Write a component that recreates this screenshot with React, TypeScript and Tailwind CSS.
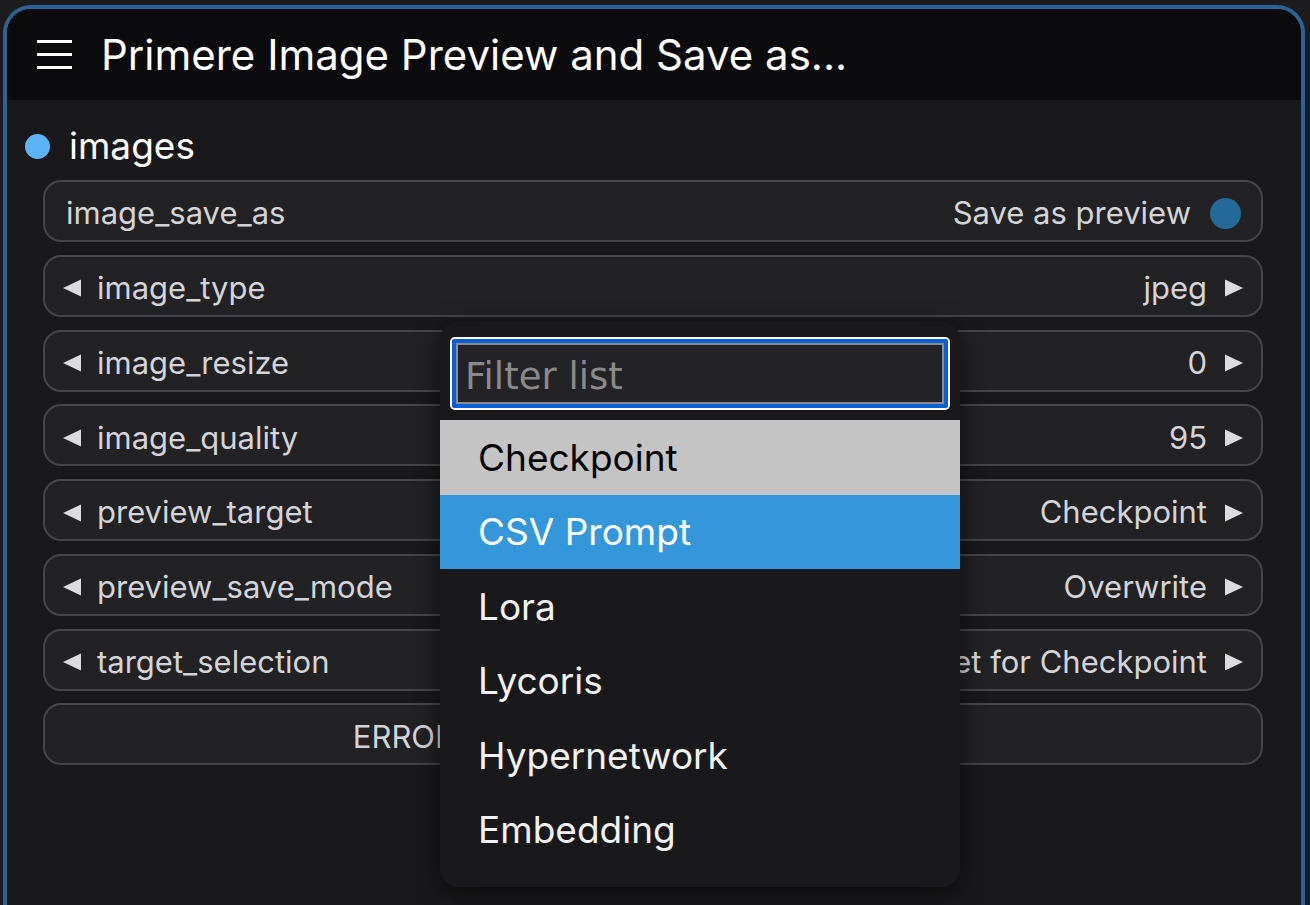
import { useState } from "react";

type Row = { name: string; value?: string; arrows?: boolean; toggle?: boolean };

const rows: Row[] = [
  { name: "image_save_as", value: "Save as preview", toggle: true },
  { name: "image_type", value: "jpeg", arrows: true },
  { name: "image_resize", value: "0", arrows: true },
  { name: "image_quality", value: "95", arrows: true },
  { name: "preview_target", value: "Checkpoint", arrows: true },
  { name: "preview_save_mode", value: "Overwrite", arrows: true },
  { name: "target_selection", value: "Select target for Checkpoint", arrows: true },
];

const options = ["Checkpoint", "CSV Prompt", "Lora", "Lycoris", "Hypernetwork", "Embedding"];

// small triangle used for the combo arrows
const Arrow = ({ dir }: { dir: "left" | "right" }) => (
  <svg width="18" height="18" viewBox="0 0 18 18" className="shrink-0">
    {dir === "left" ? (
      <polygon points="18,0.5 18,17.5 0,9" fill="#dcdce0" />
    ) : (
      <polygon points="0,0.5 0,17.5 18,9" fill="#dcdce0" />
    )}
  </svg>
);

const Widget = ({ row }: { row: Row }) => (
  <div className="flex h-[62px] items-center rounded-[18px] border-2 border-[#45454a] bg-[#222225] pt-[5px] text-[31px] text-[#d4d4d8]">
    {row.arrows ? (
      <div className="flex w-full items-center pl-[18px] pr-[18px]">
        <Arrow dir="left" />
        <span className="ml-[16px] whitespace-nowrap">{row.name}</span>
        <span className="ml-auto mr-[18px] whitespace-nowrap">{row.value}</span>
        <Arrow dir="right" />
      </div>
    ) : (
      <div className="flex w-full items-center pl-[21px] pr-[20px]">
        <span className="whitespace-nowrap">{row.name}</span>
        <span className="ml-auto mr-[19px] whitespace-nowrap">{row.value}</span>
        <span className="h-[31px] w-[31px] rounded-full bg-[#246a99]" />
      </div>
    )}
  </div>
);

export default function App() {
  const [active] = useState(1);

  return (
    <div
      className="relative h-[905px] w-[1310px] overflow-hidden bg-[#1c1c1e] pl-[3px] pt-[5px]"
      style={{ fontFamily: "Inter, 'Noto Sans', sans-serif" }}
    >
      <div className="h-[920px] w-[1302px] rounded-t-[28px] border-4 border-b-0 border-[#2a6496] bg-[#19191b]">
        {/* title bar */}
        <div className="flex h-[91px] items-center rounded-t-[24px] bg-[#0b0b0d] pl-[30px]">
          <div className="flex w-[35px] flex-col gap-[10px]">
            <span className="h-[3px] w-full bg-white" />
            <span className="h-[3px] w-full bg-white" />
            <span className="h-[3px] w-full bg-white" />
          </div>
          <span className="ml-[29px] whitespace-nowrap text-[42px] text-white">
            Primere Image Preview and Save as...
          </span>
        </div>

        {/* output slot */}
        <div className="flex h-[80px] items-center pl-[18px] pt-[12px]">
          <span className="h-[25px] w-[25px] rounded-full bg-[#5cb3f6]" />
          <span className="ml-[19px] text-[37px] text-white">images</span>
        </div>

        {/* widgets */}
        <div className="flex flex-col gap-[12.75px] pl-[36px] pr-[38px]">
          {rows.map((r) => (
            <Widget key={r.name} row={r} />
          ))}
          <div className="flex h-[62px] items-center justify-center rounded-[18px] border-2 border-[#45454a] bg-[#222225] pt-[5px] text-[31px] text-[#d4d4d8]">
            <span className="whitespace-nowrap">ERROR: Select target for saving previews</span>
          </div>
        </div>
      </div>

      {/* combo filter dropdown */}
      <div className="absolute left-[440px] top-[322px] h-[565px] w-[520px] overflow-hidden rounded-[18px] bg-[#19191b] shadow-[0_6px_24px_rgba(0,0,0,0.6)]">
        <div className="px-[10px] pt-[15px]">
          <div className="rounded-[5px] border-2 border-white">
            <div className="rounded-[3px] border-[4px] border-[#0b5fd8]">
              <div className="flex h-[61px] items-center border-2 border-[#8c8c8c] bg-[#232327] pl-[7px] pt-[6px]">
                <span
                  className="text-[37px] text-[#8a8a8a]"
                  style={{ fontFamily: "'DejaVu Sans', sans-serif" }}
                >
                  Filter list
                </span>
              </div>
            </div>
          </div>
        </div>
        <div className="mt-[10px] flex flex-col">
          {options.map((o, i) => (
            <div
              key={o}
              className={
                "flex h-[74.5px] items-center pl-[38px] text-[37px] " +
                (i === 0
                  ? "bg-[#c4c4c4] text-black"
                  : i === active
                  ? "bg-[#3497d9] text-white"
                  : "text-[#f2f2f2]")
              }
            >
              {o}
            </div>
          ))}
        </div>
      </div>
    </div>
  );
}
